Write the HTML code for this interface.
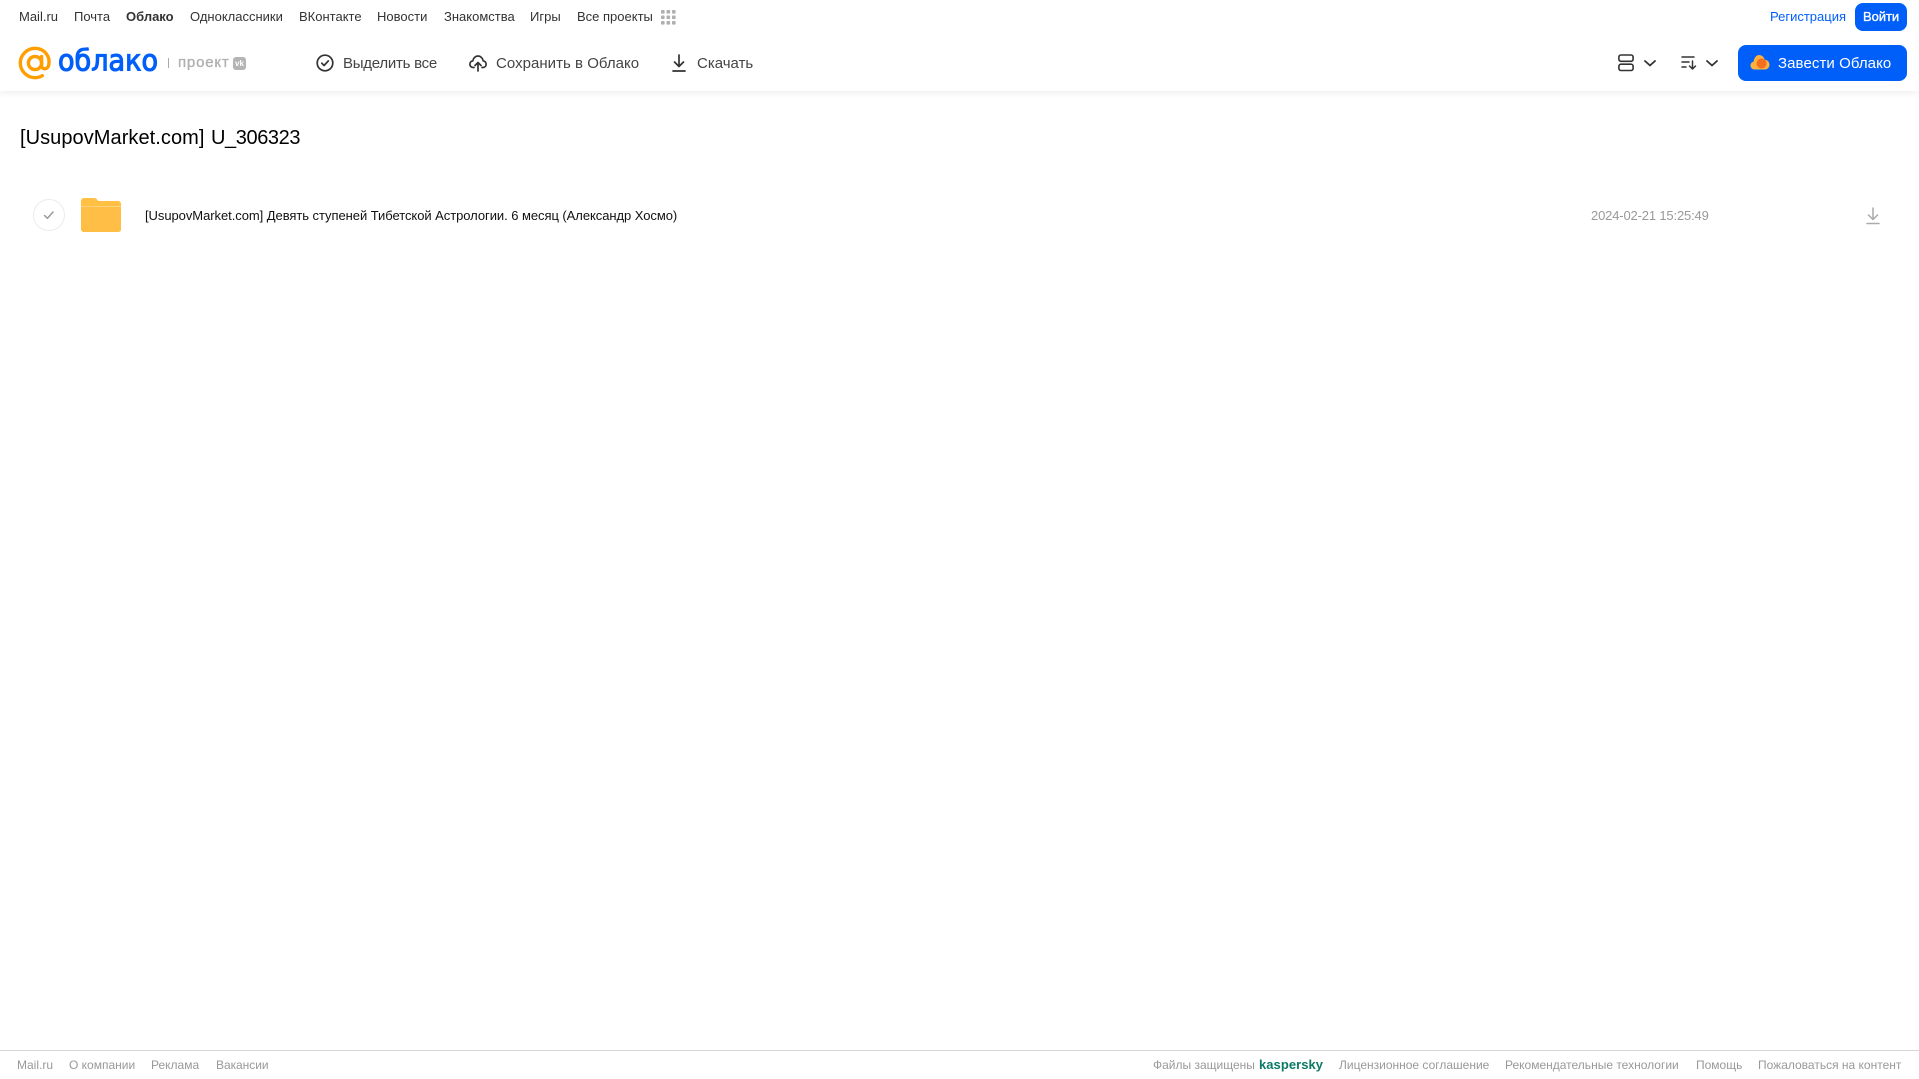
<!DOCTYPE html>
<html lang="ru"><head><meta charset="utf-8"><title>Облако</title>
<style>
html,body{margin:0;padding:0;background:#fff;width:1919px;height:1079px;overflow:hidden}
body{position:relative;font-family:"Liberation Sans",Arial,sans-serif}
.t{position:absolute;white-space:nowrap}
.n{top:8px;line-height:17px;font-size:13px;color:#333}
.b{top:54px;line-height:20px;font-size:15px;color:#444}
.f{top:1057px;line-height:16px;font-size:12px;color:#999}
svg{position:absolute;overflow:visible}
</style></head><body>
<div style="position:absolute;left:0;top:0;width:1919px;height:91px;background:#fff;box-shadow:0 1px 8px rgba(0,0,0,.09)"></div>

<span class="t n" style="left:19px">Mail.ru</span>
<span class="t n" style="left:74px">Почта</span>
<span class="t n" style="left:126px;font-weight:700">Облако</span>
<span class="t n" style="left:190px">Одноклассники</span>
<span class="t n" style="left:299px">ВКонтакте</span>
<span class="t n" style="left:377px">Новости</span>
<span class="t n" style="left:444px">Знакомства</span>
<span class="t n" style="left:530px">Игры</span>
<span class="t n" style="left:577px">Все проекты</span>
<svg style="left:661px;top:10px" width="15" height="15" fill="#b0b0b0"><rect x="0" y="0" width="3.600" height="3.600" rx=".8"/><rect x="5.500" y="0" width="3.600" height="3.600" rx=".8"/><rect x="11" y="0" width="3.600" height="3.600" rx=".8"/><rect x="0" y="5.500" width="3.600" height="3.600" rx=".8"/><rect x="5.500" y="5.500" width="3.600" height="3.600" rx=".8"/><rect x="11" y="5.500" width="3.600" height="3.600" rx=".8"/><rect x="0" y="11" width="3.600" height="3.600" rx=".8"/><rect x="5.500" y="11" width="3.600" height="3.600" rx=".8"/><rect x="11" y="11" width="3.600" height="3.600" rx=".8"/></svg>
<span class="t n" style="left:1770px;color:#005ff9">Регистрация</span>
<div style="position:absolute;left:1855px;top:3px;width:52px;height:28px;border-radius:8px;background:#005ff9"></div>
<span class="t n" style="left:1863px;color:#fff;-webkit-text-stroke:.35px #fff;letter-spacing:-.05px">Войти</span>

<svg style="left:18px;top:46px" width="34" height="34" viewBox="0 0 34 34" fill="none"><circle cx="17" cy="17" r="6.600" stroke="#ff9e00" stroke-width="3.400"/><path d="M23.600 10.600V19.500c0 4.600 6.200 4.300 7.200-.6 1.800-8.800-4.800-16.600-13.800-16.600C9 2.300 2.300 9 2.300 17s6.700 14.700 14.700 14.700c2.900 0 5.300-.8 7.300-2" stroke="#ff9e00" stroke-width="3.400" stroke-linecap="round"/></svg>
<svg style="left:0;top:0" width="300" height="90"><text x="58" y="70.500" font-family="'DejaVu Sans',sans-serif" font-size="29" fill="#005ff9" stroke="#005ff9" stroke-width="1.100" textLength="100" lengthAdjust="spacingAndGlyphs">облако</text></svg>
<div style="position:absolute;left:168px;top:58px;width:1px;height:10px;background:#aaa"></div>
<span class="t" style="left:178px;top:53px;line-height:20px;font-size:15px;color:#b0b0b0;-webkit-text-stroke:.35px #b0b0b0;letter-spacing:.8px">проект</span>
<div style="position:absolute;left:233px;top:57px;width:13px;height:13px;border-radius:3px;background:#b4b4b4;color:#fff;font-size:8px;font-weight:700;line-height:13px;text-align:center">vk</div>

<svg style="left:316px;top:54px" width="18" height="18" fill="none" stroke="#333" stroke-width="1.700" stroke-linecap="round" stroke-linejoin="round"><circle cx="9" cy="9" r="7.800"/><path d="M5.800 9.200l2.300 2.300 4.200-4.600"/></svg>
<span class="t b" style="left:343px;letter-spacing:-.25px">Выделить все</span>
<svg style="left:469px;top:54px" width="18" height="18" fill="none" stroke="#333" stroke-width="1.700" stroke-linecap="round" stroke-linejoin="round"><path d="M5 13.500H4.200C2 13.500.9 11.800.9 10.200c0-1.700 1.200-3.100 2.900-3.300C4.300 4 6.500 2 9 2s4.700 2 5.200 4.900c1.700.2 2.900 1.600 2.900 3.300 0 1.600-1.100 3.300-3.300 3.300H13"/><path d="M9 17V9M6 11.500L9 8.500l3 3"/></svg>
<span class="t b" style="left:496px;letter-spacing:.03px">Сохранить в Облако</span>
<svg style="left:672px;top:54px" width="14" height="18" fill="none" stroke="#333" stroke-width="1.700" stroke-linecap="round" stroke-linejoin="round"><path d="M7 1v11M2.500 8L7 12.500 11.500 8M1 17h12"/></svg>
<span class="t b" style="left:697px">Скачать</span>

<svg style="left:1618px;top:54px" width="16" height="18" fill="none" stroke="#333" stroke-width="1.600"><rect x=".9" y="1" width="14.200" height="6.300" rx="2"/><rect x=".9" y="10.200" width="14.200" height="6.300" rx="2"/></svg>
<svg style="left:1644px;top:60px" width="12" height="7" fill="none" stroke="#333" stroke-width="1.800" stroke-linecap="round" stroke-linejoin="round"><path d="M1 1l5 4.500L11 1"/></svg>
<svg style="left:1681px;top:56px" width="16" height="14" fill="none" stroke="#333" stroke-width="1.500" stroke-linecap="round" stroke-linejoin="round"><path d="M1 1h12M1 6h7M1 11h4M11.500 5v8M8.500 10l3 3 3-3"/></svg>
<svg style="left:1706px;top:60px" width="12" height="7" fill="none" stroke="#333" stroke-width="1.800" stroke-linecap="round" stroke-linejoin="round"><path d="M1 1l5 4.500L11 1"/></svg>

<div style="position:absolute;left:1738px;top:45px;width:169px;height:36px;border-radius:8px;background:#005ff9"></div>
<svg style="left:1750px;top:54px" width="20" height="17"><path d="M4.500 15.500C2 15.500 .5 13.500 .5 11.500c0-2 1.300-3.500 3-3.800C4.200 3.500 6.500 1 9 1c2.800 0 5 2 5.700 4.800 2.800.1 4.800 2.300 4.800 4.900 0 2.700-2.100 4.800-4.800 4.800z" fill="#ffb13d"/><circle cx="11.500" cy="9.500" r="5" fill="#f2701d"/></svg>
<span class="t b" style="left:1778px;color:#fff;letter-spacing:.08px">Завести Облако</span>

<span class="t" style="left:20px;top:126px;line-height:25px;font-size:20px;color:#000;letter-spacing:.06px">[UsupovMarket.com]</span>
<span class="t" style="left:211px;top:126px;line-height:25px;font-size:20px;color:#000;letter-spacing:-.4px">U_306323</span>

<div style="position:absolute;left:33px;top:199px;width:30px;height:30px;border:1px solid #ececec;border-radius:50%"></div>
<svg style="left:43px;top:210px" width="12" height="10" fill="none" stroke="#999" stroke-width="1.500" stroke-linecap="round" stroke-linejoin="round"><path d="M1.500 5.500l3 2.800L10 2"/></svg>
<svg style="left:81px;top:198px" width="40" height="34"><path d="M3 0h10c2 0 3 1 4 3h20c1.700 0 3 1.300 3 3v25c0 1.700-1.300 3-3 3H3c-1.700 0-3-1.300-3-3V3C0 1.300 1.300 0 3 0z" fill="#ffc043"/><path d="M0 9h40v22c0 1.700-1.300 3-3 3H3c-1.700 0-3-1.300-3-3z" fill="#ffbe45"/><path d="M0 8h40v1H0z" fill="#ffd27a"/></svg>
<span class="t" style="left:145px;top:207px;line-height:17px;font-size:13px;color:#111;letter-spacing:-.055px">[UsupovMarket.com] Девять ступеней Тибетской Астрологии. 6 месяц (Александр Хосмо)</span>
<span class="t" style="left:1591px;top:207px;line-height:17px;font-size:13px;color:#999;letter-spacing:-.16px">2024-02-21 15:25:49</span>
<svg style="left:1866px;top:207px" width="14" height="18" fill="none" stroke="#aaa" stroke-width="1.500" stroke-linecap="round" stroke-linejoin="round"><path d="M7 1v11M2.500 8L7 12.500 11.500 8"/><path d="M1 16.500h12"/></svg>

<div style="position:absolute;left:0;top:1050px;width:1919px;height:1px;background:#d6d6d6"></div>
<span class="t f" style="left:17px">Mail.ru</span>
<span class="t f" style="left:69px">О компании</span>
<span class="t f" style="left:151px">Реклама</span>
<span class="t f" style="left:216px;letter-spacing:-.05px">Вакансии</span>
<span class="t f" style="left:1153px">Файлы защищены</span>
<span class="t f" style="left:1259px;font-size:13px;font-weight:700;color:#0b7a66;letter-spacing:.05px">kaspersky</span>
<span class="t f" style="left:1339px">Лицензионное соглашение</span>
<span class="t f" style="left:1505px">Рекомендательные технологии</span>
<span class="t f" style="left:1696px">Помощь</span>
<span class="t f" style="left:1758px">Пожаловаться на контент</span>
</body></html>
